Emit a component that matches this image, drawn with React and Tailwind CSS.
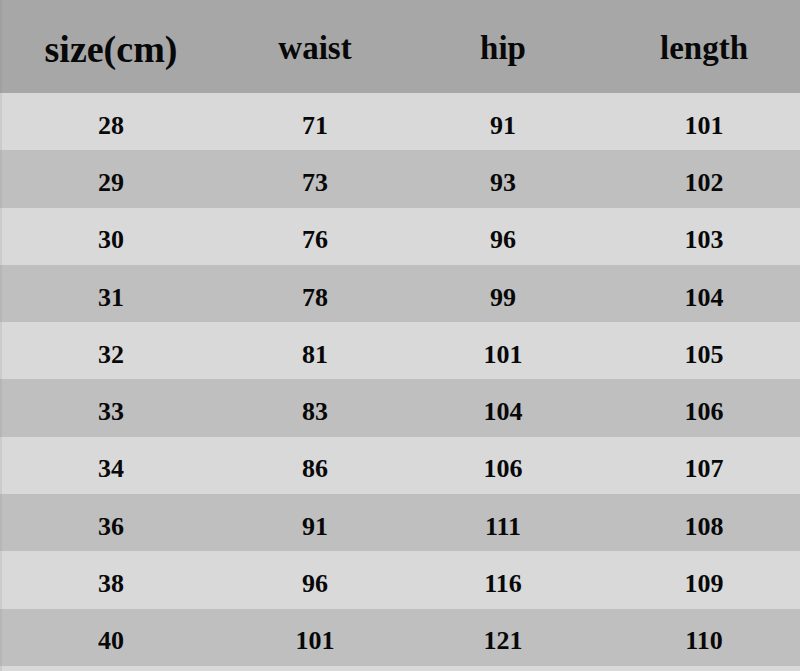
import React from "react";

const rows = [
  ["28", "71", "91", "101"],
  ["29", "73", "93", "102"],
  ["30", "76", "96", "103"],
  ["31", "78", "99", "104"],
  ["32", "81", "101", "105"],
  ["33", "83", "104", "106"],
  ["34", "86", "106", "107"],
  ["36", "91", "111", "108"],
  ["38", "96", "116", "109"],
  ["40", "101", "121", "110"],
];

const font = { fontFamily: '"Liberation Serif", "Times New Roman", serif' };

export default function App() {
  return (
    <div
      className="w-[800px] h-[671px] overflow-hidden bg-[#d9d9d9] text-[#080808] font-bold"
      style={font}
    >
      <div className="grid grid-cols-[218px_190px_186px_216px] h-[93px] bg-[#a7a7a7] border-l-2 border-[#a0a0a0]">
        <div className="flex items-center justify-center pt-1 text-[38px] leading-none">size(cm)</div>
        <div className="flex items-center justify-center pt-1 text-[33px] leading-none">waist</div>
        <div className="flex items-center justify-center pt-1 text-[33px] leading-none">hip</div>
        <div className="flex items-center justify-center pt-1 text-[33px] leading-none">length</div>
      </div>
      {rows.map((r, i) => (
        <div
          key={i}
          className={
            i % 2 === 0
              ? "grid grid-cols-[218px_190px_186px_216px] h-[57.3px] bg-[#d9d9d9] border-l-2 border-[#cbcbcb]"
              : "grid grid-cols-[218px_190px_186px_216px] h-[57.3px] bg-[#bfbfbf] border-l-2 border-[#b6b6b6]"
          }
        >
          {r.map((c, j) => (
            <div
              key={j}
              className="flex items-center justify-center pt-2 text-[26px] leading-none"
            >
              {c}
            </div>
          ))}
        </div>
      ))}
      <div className="h-[10px] bg-[#d9d9d9] border-l-2 border-[#cbcbcb]" />
    </div>
  );
}
